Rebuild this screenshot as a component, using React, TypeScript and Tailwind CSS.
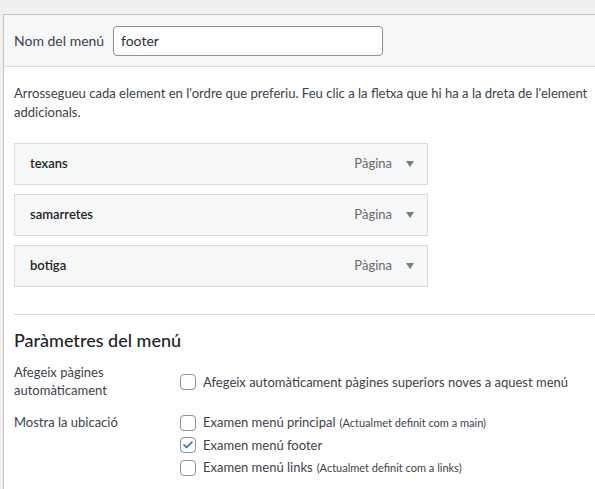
import { Check } from "lucide-react";

type Item = { title: string; type: string };

const items: Item[] = [
  { title: "texans", type: "Pàgina" },
  { title: "samarretes", type: "Pàgina" },
  { title: "botiga", type: "Pàgina" },
];

const locations = [
  { label: "Examen menú principal", note: "(Actualmet definit com a main)", checked: false },
  { label: "Examen menú footer", note: "", checked: true },
  { label: "Examen menú links", note: "(Actualmet definit com a links)", checked: false },
];

function Box({ checked }: { checked: boolean }) {
  return (
    <span className="flex h-4 w-4 shrink-0 items-center justify-center rounded-[4px] border border-[#8c8f94] bg-white">
      {checked ? <Check className="h-3 w-3 text-[#2271b1]" strokeWidth={3.5} /> : null}
    </span>
  );
}

export default function App() {
  return (
    <div
      className="h-[489px] w-[595px] overflow-hidden bg-[#f0f0f1] pt-[14px] pl-[3px] text-[13px] text-[#3c434a]"
      style={{ fontFamily: "'Segoe UI', Lato, 'Noto Sans', sans-serif" }}
    >
      <div className="h-full w-[700px] border-t border-l border-[#c3c4c7] bg-white">
        <div className="flex h-[52px] items-center border-b border-[#dcdcde] bg-[#f6f7f7] pl-[10px]">
          <span className="w-[99px] text-[14px]">Nom del menú</span>
          <div className="flex h-[30px] w-[270px] items-center rounded-[4px] border border-[#8c8f94] bg-white px-[7px] text-[14px] text-[#2c3338]">
            footer
          </div>
        </div>

        <div className="pl-[10px]">
          <p className="mt-[17px] text-[13.05px] leading-[19px]">
            Arrossegueu cada element en l'ordre que preferiu. Feu clic a la fletxa que hi ha a la dreta de l'element
            <br />
            addicionals.
          </p>

          <div className="mt-[21px] flex flex-col gap-[9px]">
            {items.map((item) => (
              <div
                key={item.title}
                className="flex h-[42px] w-[414px] items-center border border-[#dcdcde] bg-[#f6f7f7] pl-[15px] pr-[12px]"
              >
                <span className="flex-1 text-[13px] font-semibold text-[#1d2327]">{item.title}</span>
                <span className="text-[13px] text-[#646970]">{item.type}</span>
                <svg className="ml-[13px]" width="10" height="8" viewBox="0 0 10 8">
                  <path d="M1 1h8L5 7z" fill="#787c82" />
                </svg>
              </div>
            ))}
          </div>

          <div className="mt-[27px] border-t border-[#dcdcde]" />

          <h3 className="mt-[12px] text-[18px] font-medium text-[#1d2327]">Paràmetres del menú</h3>

          <div className="mt-[9px] flex">
            <div className="w-[166px] leading-[18px]">
              Afegeix pàgines
              <br />
              automàticament
            </div>
            <label className="flex items-center gap-[7px] pt-[1px] leading-[18px]">
              <Box checked={false} />
              Afegeix automàticament pàgines superiors noves a aquest menú
            </label>
          </div>

          <div className="mt-[14px] flex">
            <div className="w-[166px] leading-[18px]">Mostra la ubicació</div>
            <div className="flex flex-col gap-[4px]">
              {locations.map((loc) => (
                <label key={loc.label} className="flex items-center gap-[7px] leading-[18px]">
                  <Box checked={loc.checked} />
                  <span>
                    {loc.label}
                    {loc.note ? <span className="ml-[4px] text-[11px]">{loc.note}</span> : null}
                  </span>
                </label>
              ))}
            </div>
          </div>
        </div>
      </div>
    </div>
  );
}
